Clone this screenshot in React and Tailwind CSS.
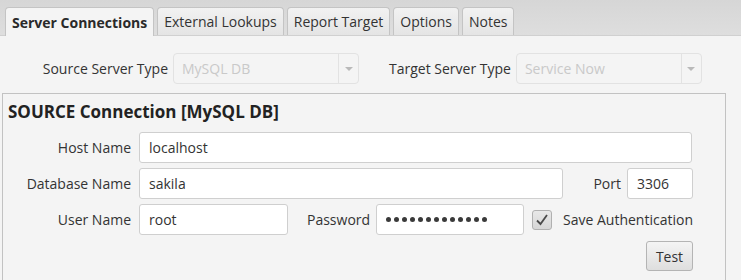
import { useState } from "react";

const tabs = ["Server Connections", "External Lookups", "Report Target", "Options", "Notes"];

function Combo({ value, width }) {
  return (
    <div
      className="flex h-[31px] items-stretch rounded-[4px] border border-[#e2e2e2] bg-[#f4f4f4]"
      style={{ width }}
    >
      <div className="flex flex-1 items-center pl-[8px] text-[#c9c9c9]">{value}</div>
      <div className="flex w-[20px] items-center justify-center border-l border-[#e2e2e2]">
        <div className="h-0 w-0 border-x-[4px] border-t-[4px] border-x-transparent border-t-[#b9b9b9]" />
      </div>
    </div>
  );
}

function Field({ value, width, password }) {
  return (
    <div
      className="flex h-[31px] items-center rounded-[3px] border border-[#cfcfcf] bg-white pl-[9px] text-[#333]"
      style={{ width }}
    >
      {password ? (
        <span className="flex gap-[3px]">
          {Array.from({ length: 13 }).map((_, i) => (
            <span key={i} className="h-[5px] w-[5px] rounded-full bg-[#3a3a3a]" />
          ))}
        </span>
      ) : (
        value
      )}
    </div>
  );
}

export default function App() {
  const [active, setActive] = useState(0);

  return (
    <div className="h-[280px] w-[741px] overflow-hidden bg-[#f4f4f4] font-['Open_Sans',sans-serif] text-[14px] text-[#333]">
      <div className="flex h-[36px] items-end gap-[3px] border-b border-[#d0d0d0] bg-gradient-to-b from-[#d6d6d6] to-[#dedede] pl-[5px]">
        {tabs.map((t, i) => (
          <button
            key={t}
            onClick={() => setActive(i)}
            className={
              i === active
                ? "-mb-px flex h-[29px] items-center rounded-t-[4px] border border-b-0 border-[#c4c4c4] bg-[#f4f4f4] px-[6px] font-bold text-[#2a2a2a]"
                : "flex h-[28px] items-center rounded-t-[4px] border border-b-0 border-[#c4c4c4] bg-gradient-to-b from-[#f2f2f2] to-[#e4e4e4] px-[6px] text-[#333]"
            }
          >
            {t}
          </button>
        ))}
      </div>

      <div className="mt-[17px] flex items-center">
        <div className="w-[168px] text-right">Source Server Type</div>
        <div className="ml-[5px]">
          <Combo value="MySQL DB" width={186} />
        </div>
        <div className="ml-[30px]">Target Server Type</div>
        <div className="ml-[5px]">
          <Combo value="Service Now" width={186} />
        </div>
      </div>

      <div className="ml-[2px] mt-[9px] h-[200px] w-[724px] border border-[#c2c2c2] pr-[32px]">
        <div className="pl-[5px] pt-[7px] text-[17px] font-bold leading-[22px] text-[#222]">
          SOURCE Connection [MySQL DB]
        </div>

        <div className="mt-[9px] flex flex-col gap-[5px]">
          <div className="flex items-center">
            <div className="w-[128px] text-right">Host Name</div>
            <div className="ml-[8px]">
              <Field value="localhost" width={553} />
            </div>
          </div>

          <div className="flex items-center">
            <div className="w-[128px] text-right">Database Name</div>
            <div className="ml-[8px]">
              <Field value="sakila" width={424} />
            </div>
            <div className="flex-1" />
            <div>Port</div>
            <div className="ml-[6px]">
              <Field value="3306" width={66} />
            </div>
          </div>

          <div className="flex items-center">
            <div className="w-[128px] text-right">User Name</div>
            <div className="ml-[8px]">
              <Field value="root" width={149} />
            </div>
            <div className="ml-[19px]">Password</div>
            <div className="ml-[6px]">
              <Field password width={148} />
            </div>
            <div className="ml-[8px] flex h-[20px] w-[20px] items-center justify-center rounded-[3px] border border-[#b0b0b0] bg-gradient-to-b from-[#e8e8e8] to-[#d6d6d6]">
              <svg width="14" height="14" viewBox="0 0 14 14">
                <path d="M2 7.5 L5.5 11 L12 2" fill="none" stroke="#4a4a4a" strokeWidth="1.8" />
              </svg>
            </div>
            <div className="flex-1 text-right">Save Authentication</div>
          </div>

          <div className="mt-px flex justify-end">
            <button className="h-[30px] w-[47px] rounded-[3px] border border-[#b4b4b4] bg-gradient-to-b from-[#f4f4f4] to-[#dedede] text-[#333]">
              Test
            </button>
          </div>
        </div>
      </div>
    </div>
  );
}
